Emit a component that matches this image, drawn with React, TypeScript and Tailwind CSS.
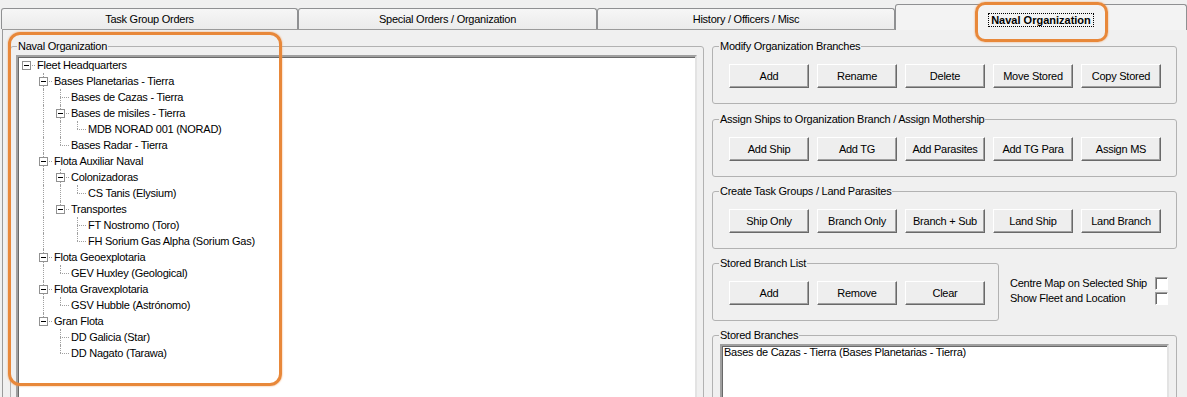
import React from 'react';

type Node = {label: string; children?: Node[]};
type Row = {label: string; depth: number; hasChildren: boolean; isLast: boolean; guides: boolean[]};

const tree: Node[] = [
    {
        label: 'Fleet Headquarters',
        children: [
            {
                label: 'Bases Planetarias - Tierra',
                children: [
                    {label: 'Bases de Cazas - Tierra'},
                    {label: 'Bases de misiles - Tierra', children: [{label: 'MDB NORAD 001 (NORAD)'}]},
                    {label: 'Bases Radar - Tierra'},
                ],
            },
            {
                label: 'Flota Auxiliar Naval',
                children: [
                    {label: 'Colonizadoras', children: [{label: 'CS Tanis (Elysium)'}]},
                    {
                        label: 'Transportes',
                        children: [{label: 'FT Nostromo (Toro)'}, {label: 'FH Sorium Gas Alpha (Sorium Gas)'}],
                    },
                ],
            },
            {label: 'Flota Geoexplotaria', children: [{label: 'GEV Huxley (Geological)'}]},
            {label: 'Flota Gravexplotaria', children: [{label: 'GSV Hubble (Astrónomo)'}]},
            {label: 'Gran Flota', children: [{label: 'DD Galicia (Star)'}, {label: 'DD Nagato (Tarawa)'}]},
        ],
    },
];

function flatten(nodes: Node[], depth: number, guides: boolean[], out: Row[]) {
    nodes.forEach((n, i) => {
        const isLast = i === nodes.length - 1;
        out.push({label: n.label, depth, hasChildren: !!n.children?.length, isLast, guides});
        if (n.children) flatten(n.children, depth + 1, [...guides, !isLast], out);
    });
    return out;
}

const rows = flatten(tree, 0, [], []);

const buttonRows = {
    modify: ['Add', 'Rename', 'Delete', 'Move Stored', 'Copy Stored'],
    assign: ['Add Ship', 'Add TG', 'Add Parasites', 'Add TG Para', 'Assign MS'],
    create: ['Ship Only', 'Branch Only', 'Branch + Sub', 'Land Ship', 'Land Branch'],
    stored: ['Add', 'Remove', 'Clear'],
};

function Tab({label, width}: {label: string; width: string}) {
    return (
        <div className={`flex h-[21px] items-center justify-center rounded-t-[3px] border border-b-0 border-[#8f9092] bg-gradient-to-b from-[#f6f6f6] to-[#ebebeb] ${width}`}>
            {label}
        </div>
    );
}

function Group({label, className = '', children}: {label: string; className?: string; children?: React.ReactNode}) {
    return (
        <div className={`relative rounded-[3px] border border-[#b2b2b2] ${className}`}>
            <span className="absolute -top-[7px] left-[6px] bg-[#f0f0f0] px-px leading-[13px]">{label}</span>
            {children}
        </div>
    );
}

function Button({label}: {label: string}) {
    return (
        <div className="flex h-[24px] w-[80px] items-center justify-center border border-t-white border-l-white border-r-[#696969] border-b-[#696969] bg-[#eeeeee] shadow-[inset_-1px_-1px_0_#a0a0a0]">
            {label}
        </div>
    );
}

function ButtonGroup({label, buttons, className = ''}: {label: string; buttons: string[]; className?: string}) {
    return (
        <Group label={label} className={className}>
            <div className="flex gap-[8px] pl-[16px] pt-[17px] pb-[15px]">
                {buttons.map(b => <Button key={b} label={b}/>)}
            </div>
        </Group>
    );
}

function Checkbox() {
    return (
        <div className="size-[13px] shrink-0 border border-t-[#a0a0a0] border-l-[#a0a0a0] border-r-white border-b-white bg-white shadow-[inset_1px_1px_0_#696969]"/>
    );
}

function TreeRow({row}: {row: Row}) {
    return (
        <div className="flex h-4 items-center">
            {row.guides.map((g, i) => (
                <div key={i} className="relative h-4 w-[17px] shrink-0">
                    {g && <div className="absolute left-[8px] top-0 bottom-0 border-l border-dotted border-[#a0a0a0]"/>}
                </div>
            ))}
            <div className="relative h-4 w-[17px] shrink-0">
                {row.depth > 0 && <div className="absolute left-[8px] top-0 h-[8px] border-l border-dotted border-[#a0a0a0]"/>}
                {!row.isLast && <div className="absolute left-[8px] top-[8px] bottom-0 border-l border-dotted border-[#a0a0a0]"/>}
                <div className="absolute left-[8px] right-0 top-[8px] border-t border-dotted border-[#a0a0a0]"/>
                {row.hasChildren && (
                    <div className="absolute left-[4px] top-[4px] flex size-[9px] items-center justify-center border border-[#919191] bg-white">
                        <div className="h-px w-[5px] bg-black"/>
                    </div>
                )}
            </div>
            <span className="ml-[2px] whitespace-nowrap leading-4">{row.label}</span>
        </div>
    );
}

export default function App() {
    return (
        <div className="relative h-[397px] w-[1187px] overflow-hidden bg-[#f0f0f0] font-['Liberation_Sans',Arial,sans-serif] text-[11px] leading-none tracking-[-0.25px] text-black">
            {/* tab strip */}
            <div className="flex h-[29px] items-end pl-px">
                <Tab label="Task Group Orders" width="w-[297px]"/>
                <Tab label="Special Orders / Organization" width="w-[299px]"/>
                <Tab label="History / Officers / Misc" width="w-[298px]"/>
                <div className="relative z-10 -mb-px flex h-[26px] w-[292px] justify-center rounded-t-[3px] border border-b-0 border-[#8f9092] bg-[#f3f3f3] pt-[8px]">
                    <span className="h-[14px] border border-dotted border-black px-[2px] font-bold leading-[12px] tracking-normal">
                        Naval Organization
                    </span>
                </div>
            </div>

            {/* tab page */}
            <div className="ml-[2px] flex h-[368px] border-l border-t border-[#9a9a9a]">
                <Group label="Naval Organization" className="ml-[7px] mt-[16px] h-[400px] w-[694px] shrink-0">
                    <div className="pl-[5px] pr-[6px] pt-[8px]">
                        <div className="h-[360px] border-2 border-t-[#a0a0a0] border-l-[#a0a0a0] border-r-[#e3e3e3] border-b-[#e3e3e3] bg-white shadow-[inset_1px_1px_0_#696969]">
                            {rows.map((r, i) => <TreeRow key={i} row={r}/>)}
                        </div>
                    </div>
                </Group>

                <div className="ml-[8px] mt-[16px] flex w-[465px] shrink-0 flex-col">
                    <ButtonGroup label="Modify Organization Branches" buttons={buttonRows.modify}/>
                    <ButtonGroup label="Assign Ships to Organization Branch / Assign Mothership" buttons={buttonRows.assign} className="mt-[15px]"/>
                    <ButtonGroup label="Create Task Groups / Land Parasites" buttons={buttonRows.create} className="mt-[14px]"/>
                    <div className="mt-[14px] flex">
                        <ButtonGroup label="Stored Branch List" buttons={buttonRows.stored} className="w-[287px]"/>
                        <div className="ml-[11px] mt-[13px] flex w-[158px] flex-col">
                            <div className="flex h-[15px] items-center justify-between">
                                <span>Centre Map on Selected Ship</span>
                                <Checkbox/>
                            </div>
                            <div className="flex h-[15px] items-center justify-between">
                                <span>Show Fleet and Location</span>
                                <Checkbox/>
                            </div>
                        </div>
                    </div>
                    <Group label="Stored Branches" className="mt-[14px] h-[100px]">
                        <div className="px-[7px] pt-[8px]">
                            <div className="h-[80px] border-2 border-t-[#a0a0a0] border-l-[#a0a0a0] border-r-[#e3e3e3] border-b-[#e3e3e3] bg-white pl-[2px] shadow-[inset_1px_1px_0_#696969]">
                                <div className="leading-[13px]">Bases de Cazas - Tierra (Bases Planetarias - Tierra)</div>
                            </div>
                        </div>
                    </Group>
                </div>
            </div>

            {/* orange callouts */}
            <div className="pointer-events-none absolute left-[8px] top-[32px] z-20 h-[354px] w-[274px] rounded-[12px] border-[3px] border-[#e8883a] shadow-[0_0_2px_#f0a060]"/>
            <div className="pointer-events-none absolute left-[975px] top-[2px] z-20 h-[40px] w-[133px] rounded-[10px] border-[3px] border-[#e8883a] shadow-[0_0_2px_#f0a060]"/>
        </div>
    );
}
